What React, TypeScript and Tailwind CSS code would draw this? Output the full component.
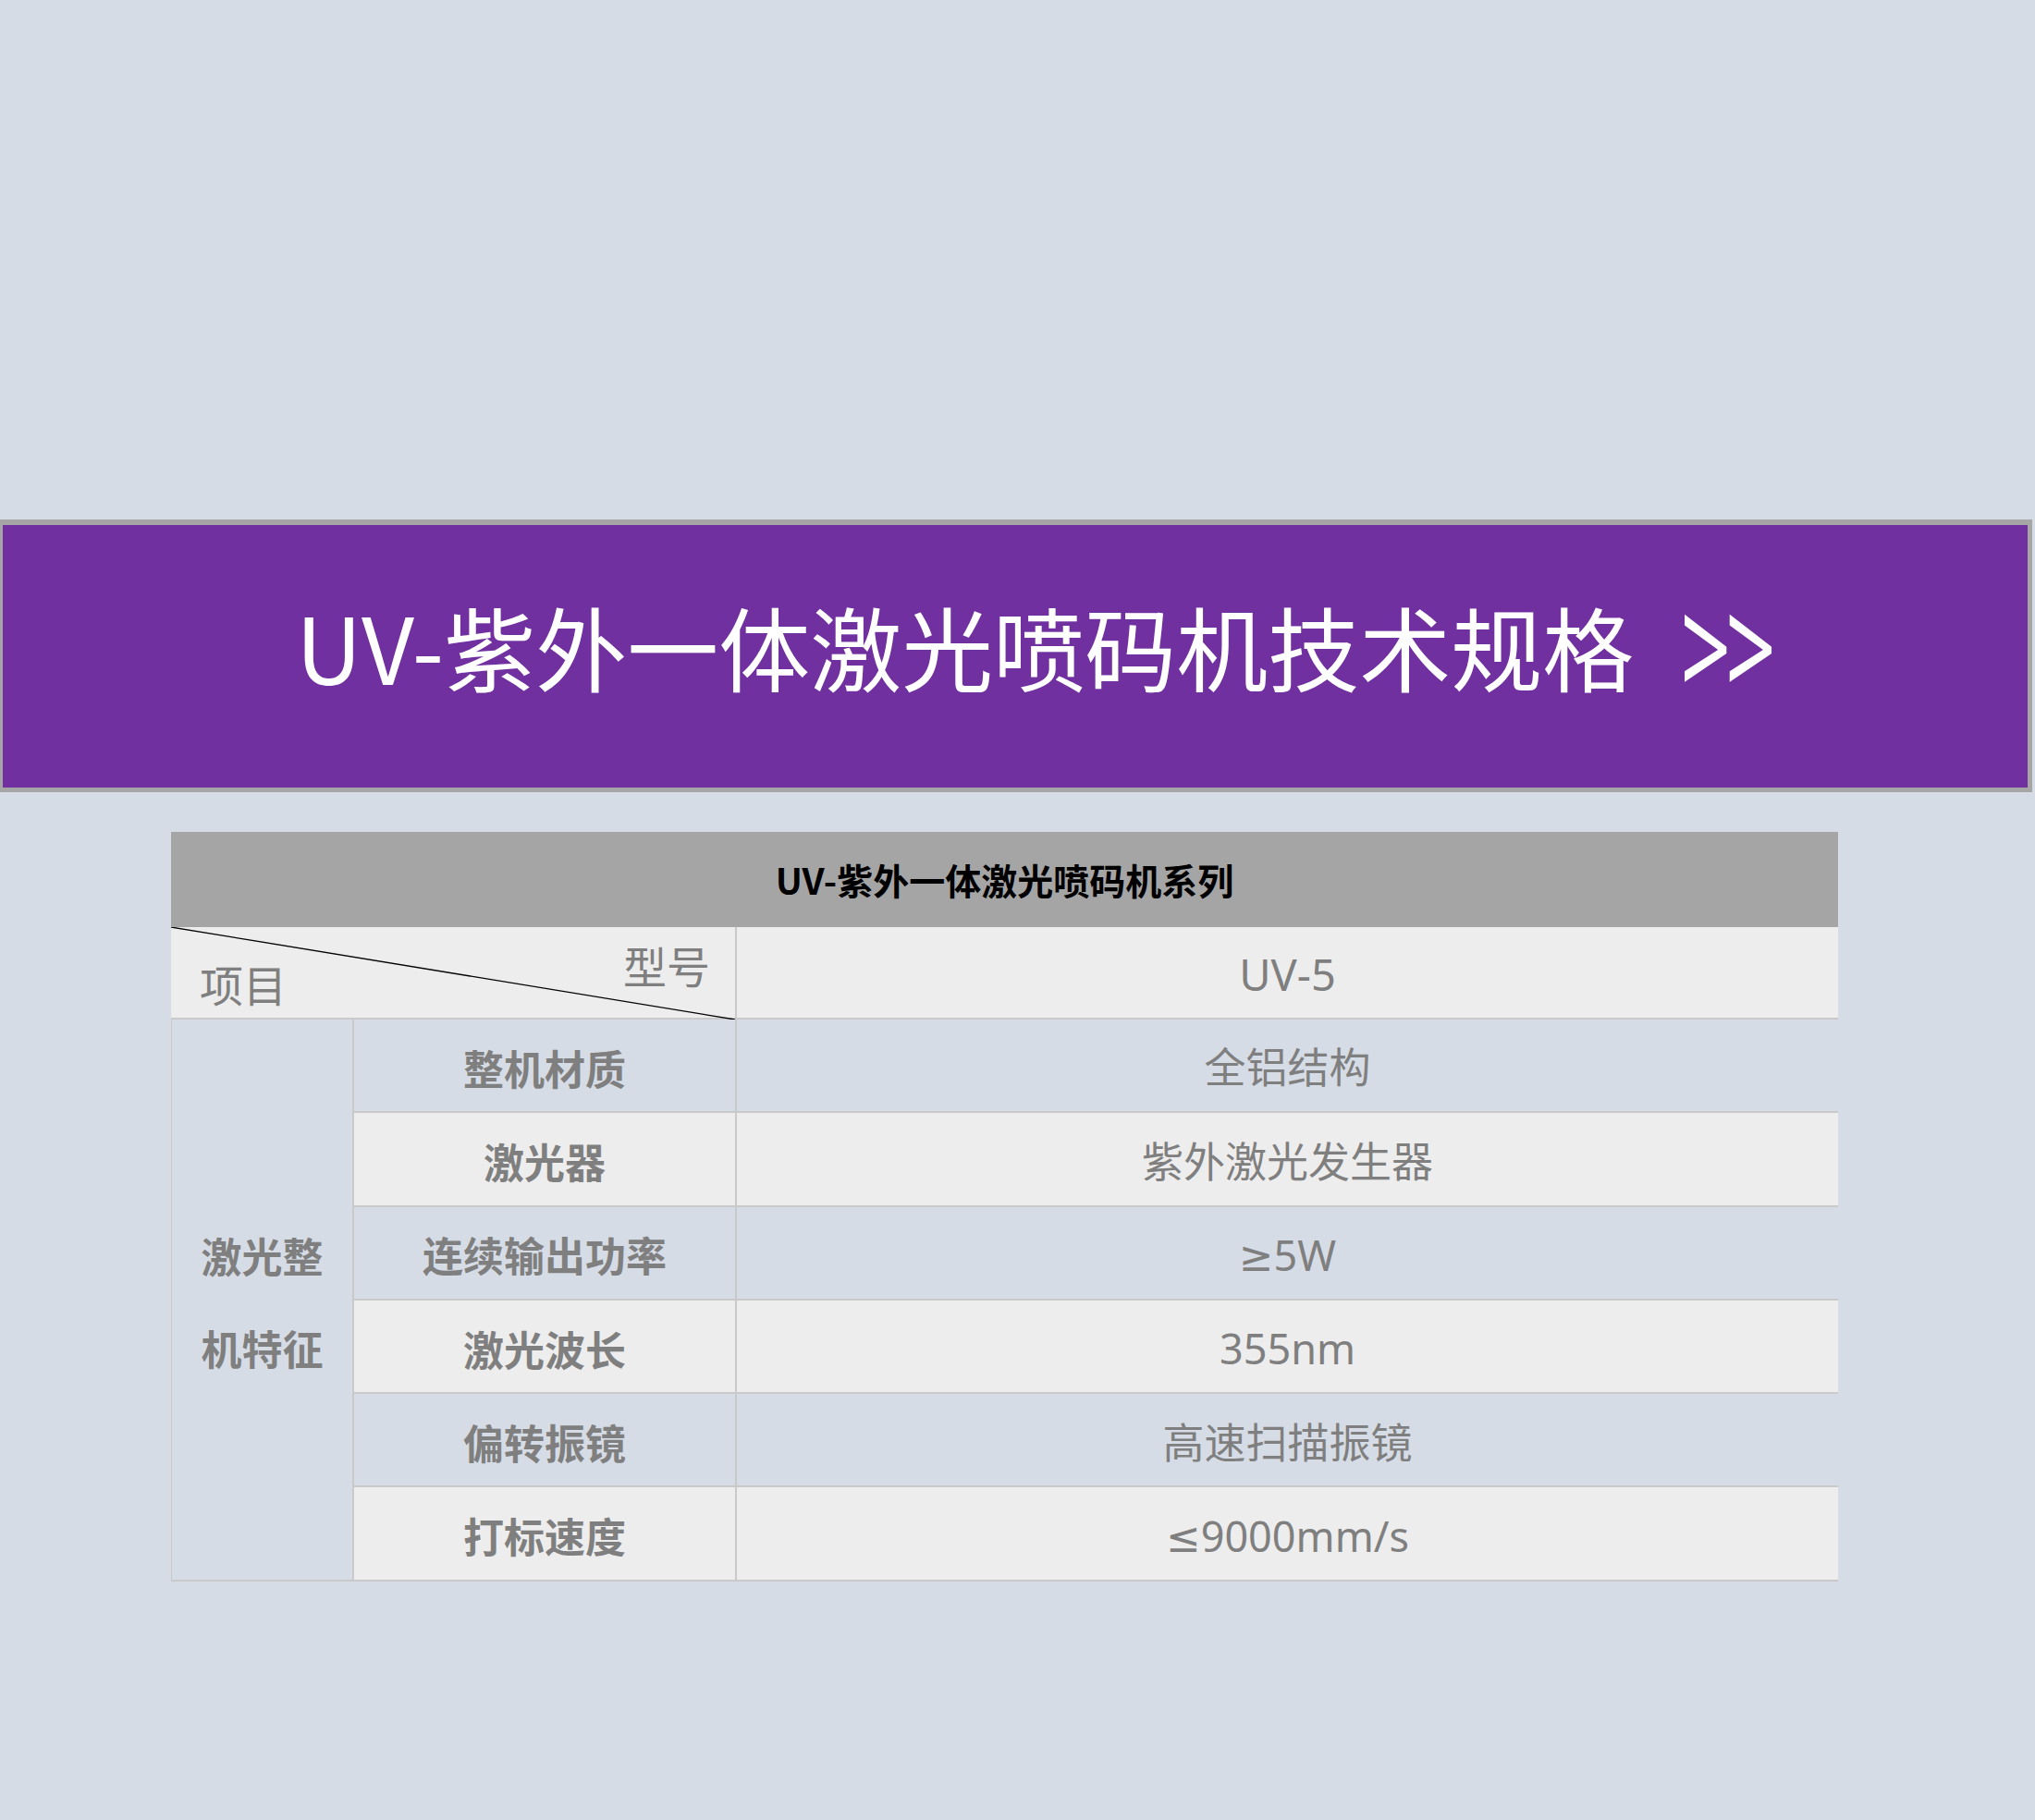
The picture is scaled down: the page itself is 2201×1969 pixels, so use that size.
const cjk = "font-['Noto_Sans_CJK_SC','Noto_Sans',sans-serif]";
const latin = "font-['Noto_Sans','DejaVu_Sans','Noto_Sans_CJK_SC',sans-serif]";

type Spec = { label: string; value: string };

const specs: Spec[] = [
  { label: "整机材质", value: "全铝结构" },
  { label: "激光器", value: "紫外激光发生器" },
  { label: "连续输出功率", value: "≥5W" },
  { label: "激光波长", value: "355nm" },
  { label: "偏转振镜", value: "高速扫描振镜" },
  { label: "打标速度", value: "≤9000mm/s" },
];

function Banner() {
  return (
    <section className="mt-[562px] h-[295px] w-[2198px] border-t-[6px] border-b-[5px] border-l-[3px] border-r-[5px] border-[#a6a6a6] bg-[#7030a0] flex items-center pl-[317px] pb-[24px]">
      <h1 className={`${cjk} text-[99px] leading-none text-white font-normal whitespace-nowrap flex items-center`}>
        <span>UV-紫外一体激光喷码机技术规格</span>
        <span className={`${latin} inline-block ml-[50px] text-[96px] tracking-[-6px] scale-y-[1.55]`}>&gt;&gt;</span>
      </h1>
    </section>
  );
}

function SpecTable() {
  return (
    <section className={`${cjk} ml-[185px] mt-[43px] w-[1803px] grid grid-cols-[196px_414px_1193px] border-r border-[#c9c9c9]`}>
      <div className="col-span-3 h-[103px] bg-[#a5a5a5] flex items-center justify-center text-[39px] font-bold text-black">
        UV-紫外一体激光喷码机系列
      </div>

      {/* diagonal header cell */}
      <div className="col-span-2 h-[100px] bg-[#ededed] relative border-b-2 border-[#c9c9c9]">
        <svg className="absolute inset-0" width="610" height="100" viewBox="0 0 610 100">
          <line x1="0" y1="0" x2="610" y2="100" stroke="#000" strokeWidth="1.3" />
        </svg>
        <span className="absolute left-[31px] top-[37px] text-[47px] leading-none text-[#7f7f7f]">项目</span>
        <span className="absolute left-[489px] top-[17px] text-[47px] leading-none text-[#7f7f7f]">型号</span>
      </div>
      <div className={`${latin} h-[100px] pt-[5px] bg-[#ededed] border-l-2 border-b-2 border-[#c9c9c9] flex items-center justify-center text-[47px] text-[#7f7f7f]`}>
        UV-5
      </div>

      <div className="row-span-6 pt-[4px] bg-[#d6dce5] border-l border-b-2 border-[#c9c9c9] flex flex-col items-center justify-center text-[44px] leading-[100px] font-bold text-[#7f7f7f]">
        <span>激光整</span>
        <span>机特征</span>
      </div>

      {specs.map((s, i) => {
        const bg = i % 2 === 0 ? "bg-[#d6dce5]" : "bg-[#ededed]";
        return (
          <div key={s.label} className="contents">
            <div className={`${bg} h-[101.3px] pt-[4px] border-l-2 border-b-2 border-[#c9c9c9] flex items-center justify-center text-[44px] font-bold text-[#7f7f7f]`}>
              {s.label}
            </div>
            <div className={`${latin} ${bg} h-[101.3px] pt-[5px] border-l-2 border-b-2 border-[#c9c9c9] flex items-center justify-center text-[45px] text-[#7f7f7f]`}>
              {s.value}
            </div>
          </div>
        );
      })}
    </section>
  );
}

export default function App() {
  return (
    <main className="w-[2201px] h-[1969px] bg-[#d6dce5] overflow-hidden">
      <div className="h-px" />
      <div className="-mt-px">
        <Banner />
        <SpecTable />
      </div>
    </main>
  );
}
